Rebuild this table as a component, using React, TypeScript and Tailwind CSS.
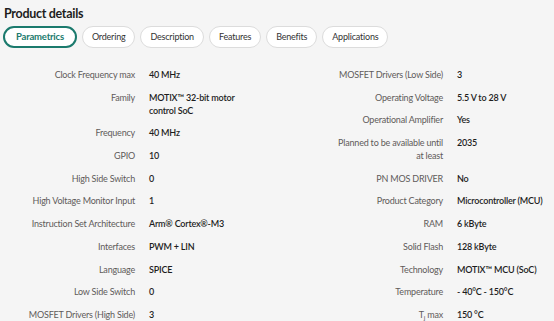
const tabs = ['Parametrics', 'Ordering', 'Description', 'Features', 'Benefits', 'Applications'];

type Row = { label: React.ReactNode; value: React.ReactNode };

const left: Row[] = [
  { label: 'Clock Frequency max', value: '40 MHz' },
  { label: 'Family', value: 'MOTIX™ 32-bit motor control SoC' },
  { label: 'Frequency', value: '40 MHz' },
  { label: 'GPIO', value: '10' },
  { label: 'High Side Switch', value: '0' },
  { label: 'High Voltage Monitor Input', value: '1' },
  { label: 'Instruction Set Architecture', value: 'Arm® Cortex®-M3' },
  { label: 'Interfaces', value: 'PWM + LIN' },
  { label: 'Language', value: 'SPICE' },
  { label: 'Low Side Switch', value: '0' },
  { label: 'MOSFET Drivers (High Side)', value: '3' },
];

const right: Row[] = [
  { label: 'MOSFET Drivers (Low Side)', value: '3' },
  { label: 'Operating Voltage', value: '5.5 V to 28 V' },
  { label: 'Operational Amplifier', value: 'Yes' },
  { label: 'Planned to be available until at least', value: '2035' },
  { label: 'PN MOS DRIVER', value: 'No' },
  { label: 'Product Category', value: 'Microcontroller (MCU)' },
  { label: 'RAM', value: '6 kByte' },
  { label: 'Solid Flash', value: '128 kByte' },
  { label: 'Technology', value: 'MOTIX™ MCU (SoC)' },
  { label: 'Temperature', value: '- 40°C - 150°C' },
  {
    label: (
      <>
        T<sub className="text-[6.5px]">j</sub> max
      </>
    ),
    value: '150 °C',
  },
];

function Column({ rows, labelW }: { rows: Row[]; labelW: string }) {
  return (
    <div className="flex flex-col gap-[9.7px]">
      {rows.map((r, i) => (
        <div key={i} className="flex gap-[14px] leading-[13px]">
          <div className={`${labelW} shrink-0 text-right text-[#5f5b5a]`}>{r.label}</div>
          <div className="w-[90px] font-semibold text-[#1d1d1d]">{r.value}</div>
        </div>
      ))}
    </div>
  );
}

export default function App() {
  return (
    <div className="w-[554px] h-[321px] overflow-hidden bg-[#f5f5f5] font-['Lato',sans-serif] text-[9px] tracking-[-0.2px]">
      <h2 className="pl-[4px] pt-[5px] text-[12.5px] font-bold leading-[18px] tracking-[-0.3px] text-[#1d1d1d]">
        Product details
      </h2>
      <div className="mt-[3px] flex gap-[5px] pl-[3px]">
        {tabs.map((t, i) => (
          <button
            key={t}
            className={
              i === 0
                ? 'h-[22px] rounded-full border-2 border-[#1b7a6d] bg-white px-[11px] text-[9.5px] font-bold text-[#1b7a6d]'
                : 'h-[22px] rounded-full border border-[#dcdcdc] bg-white px-[9px] text-[9px] text-[#333]'
            }
          >
            {t}
          </button>
        ))}
      </div>
      <div className="mt-[20px] grid grid-cols-2">
        <Column rows={left} labelW="w-[135px]" />
        <div className="pl-[56px]">
          <Column rows={right} labelW="w-[110px]" />
        </div>
      </div>
    </div>
  );
}
